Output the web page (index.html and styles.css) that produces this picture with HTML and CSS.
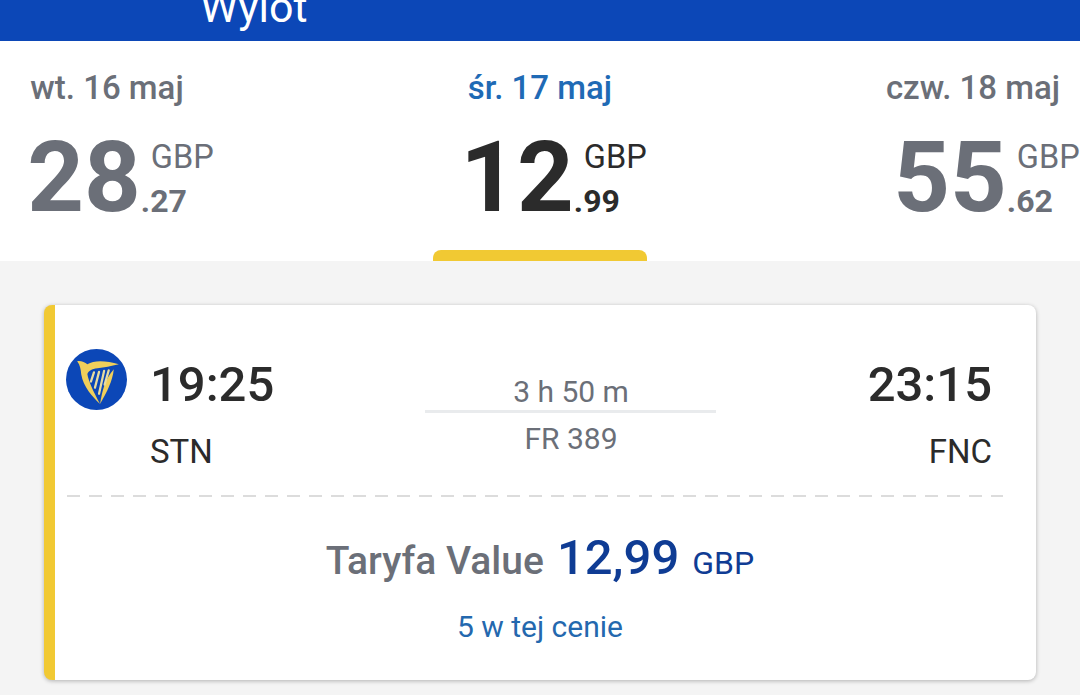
FILE: index.html
```html
<!DOCTYPE html>
<html lang="pl">
<head>
  <meta charset="UTF-8">
  <title>Wylot</title>
  <link rel="stylesheet" href="styles.css">
</head>
<body>
  <header class="topbar">
    <span class="topbar-title">Wylot</span>
  </header>

  <section class="days">
    <div class="day">
      <div class="day-label">wt. 16 maj</div>
      <div class="price">
        <span class="price-main">28</span>
        <span class="price-side"><span class="price-cur">GBP</span><span class="price-dec">.27</span></span>
      </div>
    </div>
    <div class="day day-active">
      <div class="day-label">śr. 17 maj</div>
      <div class="price">
        <span class="price-main">12</span>
        <span class="price-side"><span class="price-cur">GBP</span><span class="price-dec">.99</span></span>
      </div>
      <div class="day-tab"></div>
    </div>
    <div class="day">
      <div class="day-label">czw. 18 maj</div>
      <div class="price">
        <span class="price-main">55</span>
        <span class="price-side"><span class="price-cur">GBP</span><span class="price-dec">.62</span></span>
      </div>
    </div>
  </section>

  <main class="content">
    <article class="card">
      <div class="flight">
        <svg class="logo" viewBox="0 0 60 60" width="61" height="61">
          <circle cx="30" cy="30" r="30" fill="#0c47b7"/>
          <path fill="#f0cf5a" d="M11 12C15 11.500 18.500 13 21 15C28 10.500 40 11.500 52 15C44 17 38 18 31 19C25 19.800 22.500 21.500 21 24.500C22 31 27 42 33.500 54C26 47 17 37 15 25C14.500 20 14 16 11 12Z"/>
          <path fill="#f0cf5a" d="M47 20C46 31 40 43 33.500 54C35.500 42 38 30 47 20Z"/>
          <path stroke="#e8dca0" stroke-width="2.200" stroke-linecap="round" fill="none" d="M27.500 23L24.500 32M32.500 22.500L28.500 38M37.500 21.500L32.500 44M42 21L38 35"/>
        </svg>
        <div class="stop">
          <div class="stop-time">19:25</div>
          <div class="stop-code">STN</div>
        </div>
        <div class="route">
          <div class="route-time">3 h 50 m</div>
          <div class="route-no">FR 389</div>
        </div>
        <div class="stop stop-end">
          <div class="stop-time">23:15</div>
          <div class="stop-code">FNC</div>
        </div>
      </div>
      <div class="dashes"></div>
      <div class="fare">
        <span class="fare-name">Taryfa Value</span>
        <span class="fare-price">12,99</span>
        <span class="fare-cur">GBP</span>
      </div>
      <div class="seats">5 w tej cenie</div>
    </article>
  </main>
</body>
</html>
```

FILE: styles.css
```css
html, body {
  margin: 0;
  height: 695px;
  overflow: hidden;
}

body {
  background: #f4f4f4;
  font-family: Roboto, "Liberation Sans", sans-serif;
  color: #2b2b2b;
}

.topbar {
  height: 41px;
  background: #0c47b7;
  display: flex;
  align-items: flex-end;
  padding-left: 200px;
  overflow: hidden;
}

.topbar-title {
  color: #fff;
  font-size: 43px;
  line-height: 50px;
  margin-bottom: 9px;
  flex: none;
}

/* days */
.days {
  height: 220px;
  background: #fff;
  display: grid;
  grid-template-columns: repeat(3, 433px);
  justify-content: center;
  overflow: hidden;
}

.day {
  position: relative;
  text-align: center;
  color: #6b6f78;
}

.day-label {
  margin-top: 28px;
  font-size: 33px;
  line-height: 38px;
  font-weight: 500;
}

.price {
  display: flex;
  justify-content: center;
  padding-left: 27px;
  margin-top: 15px;
}

.price-main {
  font-size: 99px;
  line-height: 110px;
  font-weight: 700;
}

.price-side {
  display: flex;
  flex-direction: column;
  text-align: left;
  margin-top: 15px;
}

.price-cur {
  font-size: 32.500px;
  line-height: 40px;
  margin-left: 10px;
  font-weight: 400;
}

.price-dec {
  font-size: 32px;
  line-height: 40px;
  font-weight: 700;
  margin-top: 4px;
}

.day-active .day-label {
  color: #1f6ab5;
}

.day-active .price {
  color: #2b2b2b;
}

.day-tab {
  position: absolute;
  left: 109px;
  bottom: 0;
  width: 214px;
  height: 11px;
  background: #f1c933;
  border-radius: 8px 8px 0 0;
}

/* card */
.content {
  padding: 44px 44px 0;
}

.card {
  height: 375px;
  box-sizing: border-box;
  background: #fff;
  border-left: 11px solid #f1c933;
  border-radius: 8px;
  box-shadow: 0 1px 4px rgba(0, 0, 0, .28);
}

.flight {
  display: flex;
  align-items: flex-start;
  height: 190px;
  padding: 44px 44px 0 11px;
  box-sizing: border-box;
}

.logo {
  flex: none;
  margin-right: 23px;
}

.stop-time {
  font-size: 49px;
  line-height: 70px;
  font-weight: 500;
  margin-top: 1px;
}

.stop-code {
  font-size: 33px;
  line-height: 40px;
  margin-top: 12px;
}

.stop-end {
  text-align: right;
}

.route {
  width: 291px;
  margin: 0 auto;
  position: relative;
  left: -1px;
  text-align: center;
  color: #6b6f78;
  font-size: 30px;
  line-height: 34px;
}

.route-time {
  margin-top: 26px;
  padding-left: 2px;
  padding-bottom: 1px;
  border-bottom: 3px solid #e9ebed;
}

.route-no {
  margin-top: 9px;
  padding-left: 2px;
}

.dashes {
  height: 2px;
  margin: 0 33px 0 12px;
  background: repeating-linear-gradient(90deg, #dcdcdc 0, #dcdcdc 13px, transparent 13px, transparent 22px);
}

.fare {
  display: flex;
  justify-content: center;
  align-items: baseline;
  margin-top: 26px;
  line-height: 70px;
  padding-right: 11px;
}

.fare-name {
  font-size: 39px;
  font-weight: 500;
  color: #6b6f78;
}

.fare-price {
  font-size: 49px;
  font-weight: 500;
  color: #0f3c94;
  margin-left: 13px;
}

.fare-cur {
  font-size: 32px;
  color: #0f3c94;
  margin-left: 13px;
}

.seats {
  text-align: center;
  font-size: 30px;
  line-height: 36px;
  color: #2468ae;
  padding-right: 11px;
  margin-top: 11px;
}
```
